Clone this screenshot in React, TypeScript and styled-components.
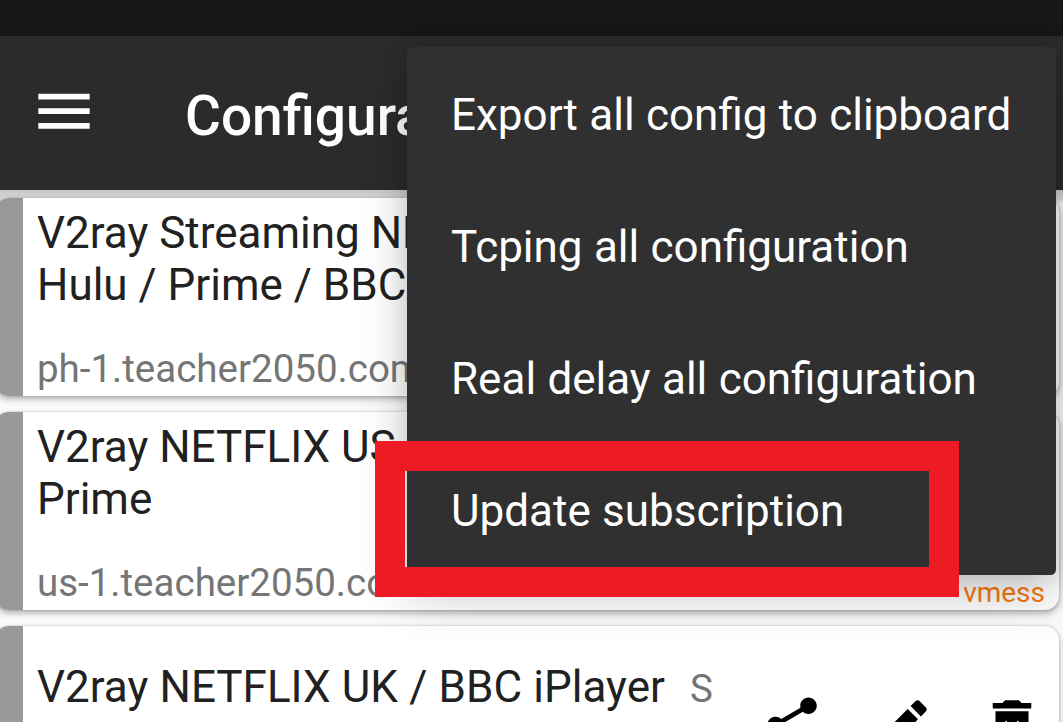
import React from "react";
import styled, { createGlobalStyle } from "styled-components";

const GlobalStyle = createGlobalStyle`
  * { box-sizing: border-box; }
  html, body { margin: 0; padding: 0; }
  body { font-family: Roboto, "Liberation Sans", sans-serif; overflow: hidden; }
`;

const Screen = styled.div`
  position: relative;
  width: 1063px;
  height: 722px;
  overflow: hidden;
  display: flex;
  flex-direction: column;
  background: #fafafa;
`;

const StatusBar = styled.div`
  flex: none;
  height: 36px;
  background: #171717;
`;

const AppBar = styled.header`
  flex: none;
  height: 154px;
  display: flex;
  align-items: center;
  gap: 87px;
  padding: 4px 0 0 30px;
  background: #2b2b2b;
`;

const Title = styled.h1`
  margin: 0;
  padding-top: 2px;
  color: #fff;
  font-size: 55px;
  font-weight: 500;
  line-height: 64px;
  white-space: nowrap;
`;

const MenuIcon = styled.svg`
  display: block;
  width: 68px;
  height: 68px;
  margin-top: -6px;
  fill: #fff;
`;

const List = styled.main`
  flex: 1;
  min-height: 0;
  display: flex;
  flex-direction: column;
  gap: 16px;
  padding-top: 8px;
  margin: 0 -1px 0 -5px;
  padding-right: 5px;
  background: linear-gradient(#c8c8c8, #d6d6d6 8px, #fafafa 14px);
`;

const Card = styled.article<{ $height: number }>`
  flex: none;
  display: flex;
  height: ${(p) => p.$height}px;
  border-radius: 14px;
  background: #fff;
  box-shadow: 0 3px 6px rgba(0, 0, 0, 0.3), 0 0 2px rgba(0, 0, 0, 0.22);
`;

const Indicator = styled.div`
  flex: none;
  width: 28px;
  border-radius: 14px 0 0 14px;
  background: #999;
`;

const CardBody = styled.div<{ $top: number }>`
  flex: 1;
  display: flex;
  flex-direction: column;
  padding: ${(p) => p.$top}px 14px 0 14px;
`;

const NameRow = styled.div`
  display: flex;
  align-items: baseline;
  gap: 25px;
`;

const Name = styled.div<{ $spacing?: number }>`
  color: #212121;
  font-size: 44px;
  line-height: 52px;
  word-spacing: ${(p) => p.$spacing ?? 0}px;
  white-space: pre;
`;

const Sub = styled.span`
  color: #757575;
  font-size: 38.5px;
  line-height: 46px;
  white-space: nowrap;
`;

const AddressRow = styled.div`
  display: flex;
  justify-content: space-between;
  align-items: flex-start;
  margin-top: 35px;
`;

const Protocol = styled.span`
  margin-top: 17px;
  color: #f97910;
  font-size: 28px;
  line-height: 32px;
`;

const Actions = styled.div`
  display: flex;
  justify-content: flex-end;
  gap: 44px;
  margin: -21px 0 0;
`;

const ActionIcon = styled.svg`
  flex: none;
  width: 66px;
  height: 66px;
  fill: #000;
`;

const Menu = styled.nav`
  position: absolute;
  left: 407px;
  top: 47px;
  width: 649px;
  height: 528px;
  display: flex;
  flex-direction: column;
  border-radius: 5.5px;
  background: #303030;
  box-shadow: 0 22px 50px rgba(0, 0, 0, 0.2), 0 2px 22px rgba(0, 0, 0, 0.12);
`;

const MenuItem = styled.div`
  height: 132px;
  display: flex;
  align-items: center;
  padding: 4px 44px 0;
  color: #fff;
  font-size: 44px;
  line-height: 52px;
  word-spacing: 0.4px;
  white-space: nowrap;
`;

const Highlight = styled.div`
  position: absolute;
  left: 375px;
  top: 441px;
  width: 584px;
  height: 156px;
  border: 30px solid #ed1c24;
`;

const menuItems = [
  "Export all config to clipboard",
  "Tcping all configuration",
  "Real delay all configuration",
  "Update subscription",
];

const icons = [
  "M18 16.08c-.76 0-1.44.3-1.96.77L8.91 12.7c.05-.23.09-.46.09-.7s-.04-.47-.09-.7l7.05-4.11c.54.5 1.25.81 2.04.81 1.66 0 3-1.34 3-3s-1.34-3-3-3-3 1.34-3 3c0 .24.04.47.09.7L8.04 9.81C7.5 9.31 6.79 9 6 9c-1.66 0-3 1.34-3 3s1.34 3 3 3c.79 0 1.5-.31 2.04-.81l7.12 4.16c-.05.21-.08.43-.08.65 0 1.61 1.31 2.92 2.92 2.92s2.92-1.31 2.92-2.92-1.31-2.92-2.92-2.92z",
  "M3 17.25V21h3.75L17.81 9.94l-3.75-3.75L3 17.25zM20.71 7.04c.39-.39.39-1.02 0-1.41l-2.34-2.34c-.39-.39-1.02-.39-1.41 0l-1.83 1.83 3.75 3.75 1.83-1.83z",
  "M6 19c0 1.1.9 2 2 2h8c1.1 0 2-.9 2-2V7H6v12zm2.46-7.12l1.41-1.41L12 12.59l2.12-2.12 1.41 1.41L13.41 14l2.12 2.12-1.41 1.41L12 15.41l-2.12 2.12-1.41-1.41L10.59 14l-2.13-2.12zM15.5 4l-1-1h-5l-1 1H5v2h14V4z",
];

export default function App() {
  return (
    <>
      <GlobalStyle />
      <Screen>
        <StatusBar />
        <AppBar>
          <MenuIcon viewBox="0 0 68 68">
            <path d="M8.3 15.7h51.4v5.8H8.3zM8.3 30.3h51.4v5.8H8.3zM8.3 44.9h51.4v5.8H8.3z" />
          </MenuIcon>
          <Title>Configura</Title>
        </AppBar>
        <List>
          <Card $height={198}>
            <Indicator />
            <CardBody $top={9}>
              <Name>{"V2ray Streaming NE\nHulu / Prime / BBC"}</Name>
              <AddressRow>
                <Sub>ph-1.teacher2050.com</Sub>
              </AddressRow>
            </CardBody>
          </Card>
          <Card $height={198}>
            <Indicator />
            <CardBody $top={9}>
              <Name>{"V2ray NETFLIX US\nPrime"}</Name>
              <AddressRow>
                <Sub>us-1.teacher2050.com</Sub>
                <Protocol>vmess</Protocol>
              </AddressRow>
            </CardBody>
          </Card>
          <Card $height={198}>
            <Indicator />
            <CardBody $top={35}>
              <NameRow>
                <Name $spacing={0.35}>V2ray NETFLIX UK / BBC iPlayer</Name>
                <Sub>S</Sub>
              </NameRow>
              <Actions>
                {icons.map((d) => (
                  <ActionIcon key={d} viewBox="0 0 24 24">
                    <path d={d} />
                  </ActionIcon>
                ))}
              </Actions>
            </CardBody>
          </Card>
        </List>
        <Menu>
          {menuItems.map((label) => (
            <MenuItem key={label}>{label}</MenuItem>
          ))}
        </Menu>
        <Highlight />
      </Screen>
    </>
  );
}
